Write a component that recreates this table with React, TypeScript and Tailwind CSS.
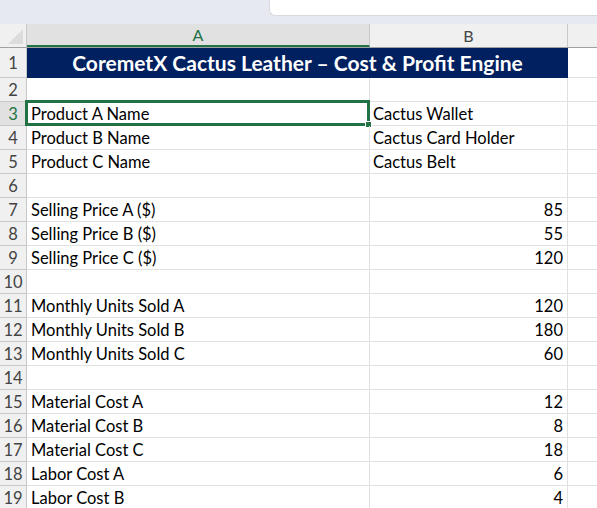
import type { FC } from "react";

type Row = { n: number; a?: string; b?: string; num?: boolean };

const rows: Row[] = [
  { n: 2 },
  { n: 3, a: "Product A Name", b: "Cactus Wallet" },
  { n: 4, a: "Product B Name", b: "Cactus Card Holder" },
  { n: 5, a: "Product C Name", b: "Cactus Belt" },
  { n: 6 },
  { n: 7, a: "Selling Price A ($)", b: "85", num: true },
  { n: 8, a: "Selling Price B ($)", b: "55", num: true },
  { n: 9, a: "Selling Price C ($)", b: "120", num: true },
  { n: 10 },
  { n: 11, a: "Monthly Units Sold A", b: "120", num: true },
  { n: 12, a: "Monthly Units Sold B", b: "180", num: true },
  { n: 13, a: "Monthly Units Sold C", b: "60", num: true },
  { n: 14 },
  { n: 15, a: "Material Cost A", b: "12", num: true },
  { n: 16, a: "Material Cost B", b: "8", num: true },
  { n: 17, a: "Material Cost C", b: "18", num: true },
  { n: 18, a: "Labor Cost A", b: "6", num: true },
  { n: 19, a: "Labor Cost B", b: "4", num: true },
];

const App: FC = () => {
  return (
    <div
      className="w-[597px] h-[508px] overflow-hidden bg-white text-[#000] select-none"
      style={{ fontFamily: "Lato, 'Open Sans', sans-serif" }}
    >
      {/* ribbon / formula bar strip */}
      <div className="h-[24px] bg-[#e6e9ef] flex pl-[269px]">
        <div className="flex-1 h-[16px] bg-white rounded-bl-[6px] border-l border-b border-[#d6d9de]" />
      </div>

      {/* column headers */}
      <div className="flex h-[24px] bg-[#f0f0f0] border-b border-[#a0a0a0] text-[16px]">
        <div className="w-[27px] shrink-0 border-r border-[#c8c8c8] relative">
          <div className="absolute right-[3px] bottom-[3px] w-0 h-0 border-l-[15px] border-l-transparent border-b-[15px] border-b-[#dcdcdc]" />
        </div>
        <div className="w-[343px] shrink-0 bg-[#e1e1e1] border-b-2 border-[#217346] flex items-center justify-center text-[#217346] border-r border-r-[#c8c8c8]">
          A
        </div>
        <div className="w-[198px] shrink-0 flex items-center justify-center text-[#444] border-r border-[#c8c8c8]">
          B
        </div>
        <div className="flex-1" />
      </div>

      {/* row 1 : merged title */}
      <div className="flex h-[30px]">
        <div className="w-[27px] shrink-0 bg-[#f0f0f0] border-r border-b border-[#c8c8c8] flex items-center justify-center pt-[2px] text-[16.5px] text-[#444]">
          1
        </div>
        <div className="w-[541px] shrink-0 bg-[#002060] flex items-center justify-center text-white font-bold text-[21px]">
          CoremetX Cactus Leather – Cost &amp; Profit Engine
        </div>
        <div className="flex-1 border-b border-[#e1e1e1]" />
      </div>

      {rows.map((r) => {
        const sel = r.n === 3;
        return (
          <div key={r.n} className="flex h-[24px] text-[16.5px]">
            <div
              className={
                sel
                  ? "w-[27px] shrink-0 bg-[#e1e1e1] border-r border-b border-[#c8c8c8] flex items-center justify-center pt-[2px] text-[#217346]"
                  : "w-[27px] shrink-0 bg-[#f0f0f0] border-r border-b border-[#c8c8c8] flex items-center justify-center pt-[2px] text-[#444]"
              }
            >
              {r.n}
            </div>
            <div className="w-[343px] shrink-0 border-r border-b border-[#e1e1e1] flex items-center pt-[2px] pl-[4px] relative">
              {r.a}
              {sel && (
                <div className="absolute -left-[2px] -top-[2px] -right-[1px] -bottom-[1px] border-[3px] border-[#217346]">
                  <div className="absolute -right-[5px] -bottom-[5px] w-[7px] h-[7px] bg-[#217346] border border-white" />
                </div>
              )}
            </div>
            <div
              className={
                r.num
                  ? "w-[198px] shrink-0 border-r border-b border-[#e1e1e1] flex items-center justify-end pt-[2px] pr-[4px]"
                  : "w-[198px] shrink-0 border-r border-b border-[#e1e1e1] flex items-center pt-[2px] pl-[3px]"
              }
            >
              {r.b}
            </div>
            <div className="flex-1 border-b border-[#e1e1e1]" />
          </div>
        );
      })}
    </div>
  );
};

export default App;
